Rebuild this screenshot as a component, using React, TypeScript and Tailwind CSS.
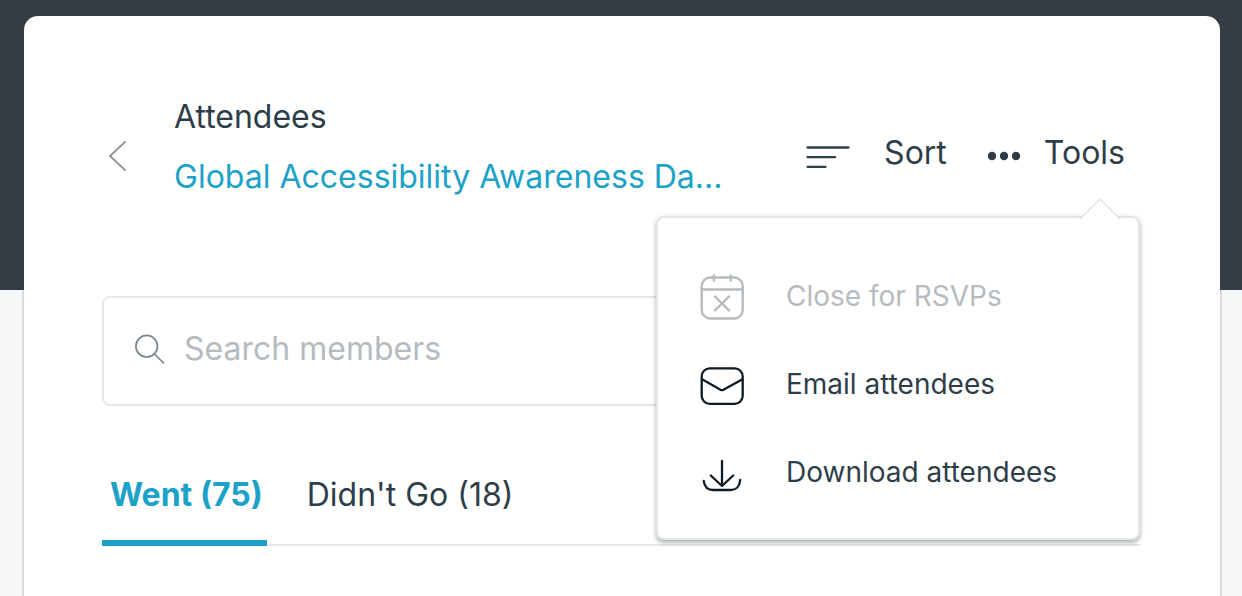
import React from "react";

function ChevronLeftIcon() {
  return (
    <svg width="20" height="60" viewBox="0 0 20 60" fill="none" stroke="#8a9299" strokeWidth="1.8" aria-hidden="true">
      <path d="M19.500 14.500 4 29l15.500 14.500" />
    </svg>
  );
}

function SortIcon() {
  return (
    <svg width="44" height="60" viewBox="0 0 44 60" fill="none" stroke="#2e3e48" strokeWidth="2.3" strokeLinecap="round" aria-hidden="true">
      <path d="M1.5 24.500h41M1.5 34.200h27.500M1.500 43.800h18" />
    </svg>
  );
}

function DotsIcon() {
  return (
    <svg width="34" height="60" viewBox="0 0 34 60" fill="#2e3e48" aria-hidden="true">
      <circle cx="5" cy="33" r="4.200" />
      <circle cx="17" cy="33" r="4.200" />
      <circle cx="29" cy="33" r="4.200" />
    </svg>
  );
}

function SearchIcon() {
  return (
    <svg width="32" height="32" viewBox="0 0 32 32" fill="none" stroke="#7c868d" strokeWidth="1.700" strokeLinecap="round" aria-hidden="true">
      <circle cx="12.700" cy="13.200" r="10.800" />
      <path d="M20.500 21 29.500 30" />
    </svg>
  );
}

function CalendarCloseIcon() {
  return (
    <svg width="44" height="48" viewBox="0 0 44 48" fill="none" stroke="#b5bbbf" strokeWidth="2.400" strokeLinecap="round" aria-hidden="true">
      <rect x="1.700" y="5.500" width="41" height="41" rx="8.500" />
      <path d="M2 17.500h40.500M13.800 3.500v5M30.700 3.500v5M15 24.500l14 14M29 24.500l-14 14" />
    </svg>
  );
}

function EnvelopeIcon() {
  return (
    <svg width="44" height="48" viewBox="0 0 44 48" fill="none" stroke="#101a24" strokeWidth="2.300" strokeLinecap="round" strokeLinejoin="round" aria-hidden="true">
      <rect x="1.700" y="8.400" width="41" height="35.400" rx="8" />
      <path d="M2.500 19.500 20.500 29.700q1.500.8 3 0L42 19.500" />
    </svg>
  );
}

function DownloadIcon() {
  return (
    <svg width="44" height="48" viewBox="0 0 44 48" fill="none" stroke="#101a24" strokeWidth="2.300" strokeLinecap="round" strokeLinejoin="round" aria-hidden="true">
      <path d="M22 13v25M10.800 27.500 22 38l11.200-10.500M3.800 33c.6 6 4.500 9 9.500 9h17.400c5 0 9-3.500 9.500-10" />
    </svg>
  );
}

const menuItems = [
  { label: "Close for RSVPs", icon: <CalendarCloseIcon />, disabled: true },
  { label: "Email attendees", icon: <EnvelopeIcon />, disabled: false },
  { label: "Download attendees", icon: <DownloadIcon />, disabled: false },
];

function ToolsMenu() {
  return (
    <div className="absolute top-[129px] right-0 z-10 w-[484px] rounded-lg border-2 border-[#e3e5e7] bg-white pt-[34px] pb-[22px] shadow-[0_3px_4px_rgba(46,62,72,0.35),0_0_6px_rgba(46,62,72,0.08)]">
      <svg className="absolute -top-5 right-4 h-[22px] w-11" viewBox="0 0 44 22" aria-hidden="true">
        <path d="M1 22 22 1l21 21z" fill="#fff" />
        <path d="M1.500 21.500 22 1l20.500 20.500" fill="none" stroke="#dcdfe1" strokeWidth="1.200" />
      </svg>
      <ul>
        {menuItems.map((item) => (
          <li key={item.label}>
            <button
              type="button"
              disabled={item.disabled}
              className="flex h-[88px] w-full items-center gap-[42px] px-[42px] text-left text-[28px] text-[#2e3e48] disabled:text-[#b5bbbf]"
            >
              {item.icon}
              <span>{item.label}</span>
            </button>
          </li>
        ))}
      </ul>
    </div>
  );
}

export default function App() {
  return (
    <div className="flex min-h-screen flex-col bg-[linear-gradient(#363d46_290px,#f6f7f9_290px)] pt-[14px] pr-5 pl-[22px] font-['Inter','Liberation_Sans',sans-serif] text-[32px] leading-[60px] text-[#2e3e48]">
      <main className="flex-1 rounded-t-2xl border-2 border-b-0 border-[#2e3e48]/15 bg-white bg-clip-padding pt-[71px] pr-20 pl-[78px]">
        <header className="relative flex items-start justify-between">
          <div className="flex items-start gap-12">
            <a href="#back" aria-label="Back" className="ml-1 pt-10">
              <ChevronLeftIcon />
            </a>
            <div>
              <h1>Attendees</h1>
              <a href="#event" className="block whitespace-nowrap text-[#1ba2c6]">
                Global Accessibility Awareness Da...
              </a>
            </div>
          </div>
          <div className="flex gap-10 pt-9 pr-[15px]">
            <button type="button" className="flex items-center gap-[34px]">
              <SortIcon />
              Sort
            </button>
            <button type="button" aria-expanded="true" className="flex items-center gap-[23px]">
              <DotsIcon />
              Tools
            </button>
          </div>
          <ToolsMenu />
        </header>

        <label className="mt-[89px] flex h-[110px] items-center gap-[18px] rounded-lg border-2 border-[#e6e7e8] px-[30px] pb-1">
          <SearchIcon />
          <input
            type="text"
            aria-label="Search members"
            placeholder="Search members"
            className="min-w-0 flex-1 outline-none placeholder:text-[#b5bbbf]"
          />
        </label>

        <div role="tablist" className="mt-[59px] flex gap-8 shadow-[inset_0_-2px_0_#e6e7e8]">
          <button type="button" role="tab" aria-selected="true" className="border-b-[6px] border-[#1ba2c6] pr-1 pl-2 pb-[15px] font-bold text-[#1ba2c6]">
            Went (75)
          </button>
          <button type="button" role="tab" aria-selected="false" className="pr-1 pl-2 pb-[21px]">
            Didn't Go (18)
          </button>
        </div>
      </main>
    </div>
  );
}
